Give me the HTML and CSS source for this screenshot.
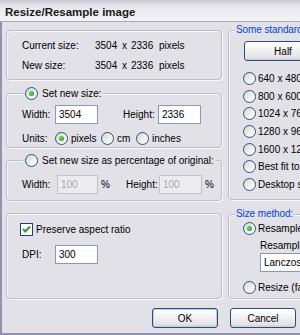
FILE: index.html
```html
<!DOCTYPE html>
<html>
<head>
<meta charset="utf-8">
<link rel="stylesheet" href="styles.css">
</head>
<body>
<div class="window">
  <div class="titlebar"><span class="title">Resize/Resample image</span></div>
  <div class="body">
    <div class="columns">
      <div class="col-left">
        <div class="group g-info">
          <div class="info-grid">
            <span>Current size:</span><span>3504</span><span>x</span><span>2336</span><span>pixels</span>
            <span>New size:</span><span>3504</span><span>x</span><span>2336</span><span>pixels</span>
          </div>
        </div>

        <div class="group g-new">
          <div class="legend"><span class="radio checked"></span><span>Set new size:</span></div>
          <div class="row">
            <span class="lbl lbl-w">Width:</span>
            <span class="input">3504</span>
            <span class="lbl lbl-h">Height:</span>
            <span class="input">2336</span>
          </div>
          <div class="row units">
            <span class="lbl lbl-w">Units:</span>
            <span class="opt opt-px"><span class="radio checked"></span>pixels</span>
            <span class="opt opt-cm"><span class="radio"></span>cm</span>
            <span class="opt"><span class="radio"></span>inches</span>
          </div>
        </div>

        <div class="group g-pct">
          <div class="legend"><span class="radio"></span><span>Set new size as percentage of original:</span></div>
          <div class="row">
            <span class="lbl lbl-pw">Width:</span>
            <span class="input disabled in-pw">100</span>
            <span class="pct">%</span>
            <span class="lbl lbl-ph">Height:</span>
            <span class="input disabled">100</span>
            <span class="pct">%</span>
          </div>
        </div>

        <div class="group g-dpi">
          <div class="row check-row">
            <span class="checkbox"><svg width="11" height="11" viewBox="0 0 11 11"><path d="M2 5 L4.3 7.5 L9 2.5" fill="none" stroke="#21a121" stroke-width="2"/></svg></span>
            <span>Preserve aspect ratio</span>
          </div>
          <div class="row dpi-row">
            <span class="lbl lbl-w">DPI:</span>
            <span class="input">300</span>
          </div>
        </div>
      </div>

      <div class="col-right">
        <div class="group g-std">
          <div class="legend blue">Some standard sizes:</div>
          <div class="btn btn-half">Half</div>
          <div class="radio-list">
            <div class="ropt"><span class="radio"></span>640 x 480</div>
            <div class="ropt"><span class="radio"></span>800 x 600</div>
            <div class="ropt"><span class="radio"></span>1024 x 768</div>
            <div class="ropt"><span class="radio"></span>1280 x 960</div>
            <div class="ropt"><span class="radio"></span>1600 x 1200</div>
            <div class="ropt"><span class="radio"></span>Best fit to desktop</div>
            <div class="ropt"><span class="radio"></span>Desktop size</div>
          </div>
        </div>

        <div class="group g-method">
          <div class="legend blue">Size method:</div>
          <div class="ropt r-first"><span class="radio checked"></span>Resample (best quality)</div>
          <div class="sub-label">Resample filter:</div>
          <div class="select">Lanczos3 filter (sharpest)</div>
          <div class="ropt r-last"><span class="radio"></span>Resize (fast)</div>
        </div>
      </div>
    </div>

    <div class="buttons">
      <div class="btn btn-default">OK</div>
      <div class="btn">Cancel</div>
    </div>
  </div>
</div>
</body>
</html>
```

FILE: styles.css
```css
html, body {
  margin: 0;
  padding: 0;
}
body {
  width: 300px;
  height: 335px;
  overflow: hidden;
  background: #e3e1e8;
  font-family: "Liberation Sans", Arial, sans-serif;
  font-size: 10px;
  color: #000;
}
.window {
  width: 300px;
  height: 335px;
  overflow: hidden;
  display: flex;
  flex-direction: column;
}
.titlebar {
  height: 21px;
  flex-shrink: 0;
  border-bottom: 1px solid #a9a9b6;
  background: linear-gradient(#c9cad2 0, #e6e6ec 30%, #f4f4f7 100%);
  display: flex;
  align-items: center;
  padding-left: 5px;
}
.title {
  font-weight: bold;
  font-size: 11.5px;
  color: #1a1a1a;
  padding-top: 2px;
}
.body {
  flex: 1;
  border-left: 2px solid #8f93ae;
  border-bottom: 2px solid #8f93ae;
  display: flex;
  flex-direction: column;
  padding: 8px 0 0 4px;
}
.columns {
  display: flex;
  gap: 6px;
}
.col-left {
  width: 216px;
  flex-shrink: 0;
  display: flex;
  flex-direction: column;
}
.col-right {
  width: 120px;
  flex-shrink: 0;
  display: flex;
  flex-direction: column;
}
.group {
  position: relative;
  box-sizing: border-box;
  border: 1px solid #c0bcc6;
  border-radius: 4px;
  box-shadow: 1px 1px 0 #f8f8fa, inset 1px 1px 0 #f8f8fa;
  padding-left: 15px;
}
.legend {
  position: absolute;
  top: -7px;
  left: 16px;
  height: 13px;
  padding: 0 2px;
  background: #e3e1e8;
  display: flex;
  align-items: center;
  gap: 4px;
  white-space: nowrap;
}
.legend.blue {
  left: 5px;
  color: #0046d5;
  top: -8px;
  letter-spacing: -0.1px;
}
.g-info {
  height: 50px;
  padding-top: 4px;
}
.info-grid {
  display: grid;
  grid-template-columns: 73px 27px 9px 28px auto;
  grid-auto-rows: 20px;
  align-items: center;
}
.g-new {
  margin-top: 13px;
  height: 55px;
  padding-top: 11px;
}
.g-pct {
  margin-top: 12px;
  height: 41px;
  padding-top: 14px;
}
.g-dpi {
  margin-top: 12px;
  height: 86px;
  padding-top: 9px;
}
.row {
  display: flex;
  align-items: center;
  white-space: nowrap;
}
.lbl-w { width: 33px; }
.lbl-h { width: 35px; margin-left: 25px; }
.lbl-pw { width: 35px; }
.lbl-ph { width: 33px; margin-left: 17px; }
.pct { margin-left: 3px; width: 8px; }
.input {
  box-sizing: border-box;
  width: 43px;
  height: 19px;
  border: 1px solid #7f9db9;
  background: #fff;
  padding-left: 3px;
  display: flex;
  align-items: center;
}
.input.in-pw { width: 41px; }
.input.disabled {
  background: #ecebef;
  border-color: #c3c1c9;
  color: #a9a9ad;
}
.units {
  margin-top: 7px;
  height: 14px;
}
.opt {
  display: flex;
  align-items: center;
  gap: 3px;
}
.opt-px { width: 46px; }
.opt-cm { width: 35px; }
.radio {
  box-sizing: border-box;
  width: 13px;
  height: 13px;
  border-radius: 50%;
  border: 1px solid #2a5381;
  background: linear-gradient(135deg, #d4d4d0 0%, #f2f2f0 60%, #ffffff 100%);
  flex-shrink: 0;
  display: flex;
  align-items: center;
  justify-content: center;
}
.radio.checked::after {
  content: "";
  width: 5px;
  height: 5px;
  border-radius: 50%;
  background: radial-gradient(circle at 40% 40%, #5fdc5f, #1c9a1c);
}
.check-row {
  height: 13px;
  gap: 3px;
  margin-left: -2px;
}
.checkbox {
  box-sizing: border-box;
  width: 13px;
  height: 13px;
  border: 1px solid #1c3f74;
  background: #fff;
  display: flex;
  align-items: center;
  justify-content: center;
}
.checkbox svg { display: block; }
.dpi-row { margin-top: 9px; }

.g-std {
  height: 170px;
  padding-top: 10px;
  padding-left: 14px;
}
.btn {
  box-sizing: border-box;
  height: 20px;
  border: 1px solid #2c4c7c;
  border-radius: 3px;
  background: linear-gradient(#ffffff 0%, #f4f3f3 40%, #e4e2e6 85%, #cfccd4 100%);
  display: flex;
  align-items: center;
  justify-content: center;
}
.btn-half {
  width: 78px;
  margin-left: 1px;
  height: 20px;
}
.radio-list {
  margin-top: 9px;
}
.ropt {
  height: 17.6px;
  display: flex;
  align-items: center;
  gap: 2px;
  white-space: nowrap;
}
.g-method {
  margin-top: 14px;
  height: 85px;
  padding-top: 6px;
  padding-left: 14px;
}
.r-first { height: 14px; }
.sub-label {
  margin-top: 3px;
  padding-left: 17px;
  height: 14px;
  display: flex;
  align-items: center;
  white-space: nowrap;
}
.select {
  box-sizing: border-box;
  margin-top: 1px;
  margin-left: 17px;
  width: 120px;
  height: 19px;
  border: 1px solid #7f9db9;
  background: #fff;
  padding-left: 3px;
  display: flex;
  align-items: center;
  white-space: nowrap;
}
.r-last {
  margin-top: 8px;
  height: 14px;
}
.buttons {
  margin-top: 9px;
  display: flex;
  justify-content: flex-end;
  gap: 12px;
  padding-right: 4px;
}
.buttons .btn {
  width: 66px;
}
.btn-default {
  box-shadow: inset 0 0 0 1px #b7cdf0;
}
```
